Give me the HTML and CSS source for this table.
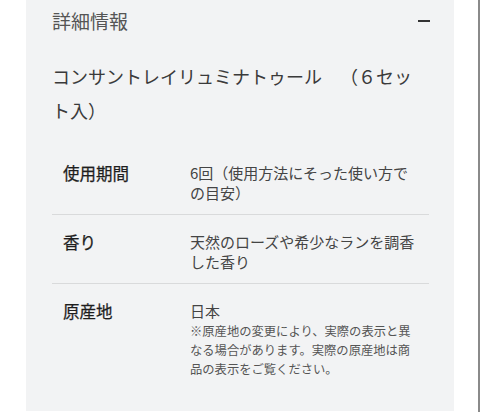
FILE: index.html
```html
<!DOCTYPE html>
<html lang="ja">
<head>
<meta charset="utf-8">
<link rel="stylesheet" href="styles.css">
</head>
<body>
<div class="page">
  <section class="panel">
    <div class="head">
      <span class="head-title">詳細情報</span>
      <span class="minus"></span>
    </div>
    <h2 class="title">コンサントレイリュミナトゥール　（６セット入）</h2>
    <div class="table">
      <div class="row">
        <div class="label">使用期間</div>
        <div class="value">6回（使用方法にそった使い方での目安）</div>
      </div>
      <div class="row">
        <div class="label">香り</div>
        <div class="value">天然のローズや希少なランを調香した香り</div>
      </div>
      <div class="row last">
        <div class="label">原産地</div>
        <div class="value">日本<div class="note">※原産地の変更により、実際の表示と異なる場合があります。実際の原産地は商品の表示をご覧ください。</div></div>
      </div>
    </div>
  </section>
  <div class="spacer"></div>
  <div class="edge"></div>
</div>
</body>
</html>
```

FILE: styles.css
```css
* { box-sizing: border-box; margin: 0; padding: 0; }
html, body { width: 480px; height: 412px; background: #fff; overflow: hidden; }
body {
  font-family: "Noto Sans CJK JP", "Noto Sans", sans-serif;
  color: #333;
  text-spacing-trim: space-all;
}
.page {
  display: flex;
  height: 412px;
  padding-left: 26px;
}
.panel {
  width: 428px;
  height: 411px;
  background: #f2f3f4;
  padding: 9px 25px 0 26px;
}
.spacer { flex: 1; }
.edge { width: 2px; background: #8a8a8a; }
.head {
  display: flex;
  align-items: center;
  justify-content: space-between;
  height: 24px;
}
.head-title {
  font-size: 19px;
  line-height: 24px;
  color: #555;
}
.minus {
  width: 12px;
  height: 2px;
  background: #333;
  margin-right: -1px;
}
.title {
  margin-top: 26px;
  font-size: 18px;
  line-height: 34px;
  font-weight: 400;
  color: #3a3a3a;
  width: 376px;
}
.table {
  margin-top: 19px;
}
.row {
  display: flex;
  padding: 17px 0 11px;
  border-bottom: 1px solid #d9dadb;
}
.row.last { border-bottom: none; }
.label {
  width: 138px;
  padding-left: 11px;
  font-size: 16.5px;
  line-height: 20px;
  font-weight: 400;
  color: #1e1e1e;
  -webkit-text-stroke: 0.25px #1e1e1e;
}
.value {
  width: 228px;
  font-size: 15px;
  line-height: 20px;
  color: #444;
}
.note {
  font-size: 12.3px;
  line-height: 19px;
  color: #555;
  margin-top: 1px;
}
```
